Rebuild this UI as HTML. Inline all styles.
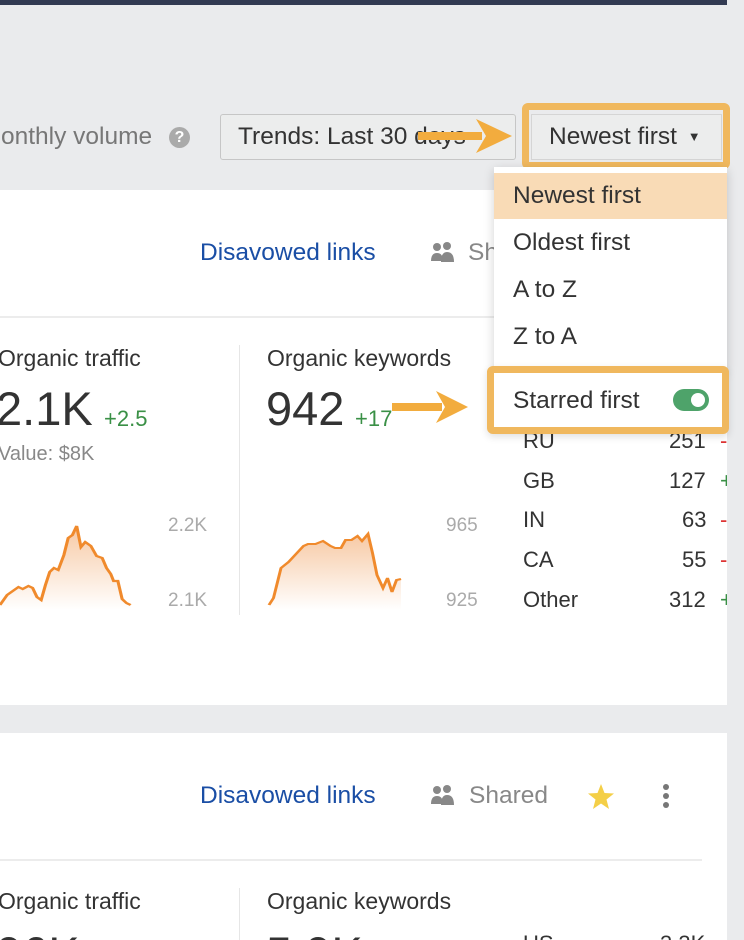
<!DOCTYPE html>
<html style="overflow:hidden;height:940px"><head><style>
body{margin:0;width:744px;height:940px;overflow:hidden;background:#eaebed;font-family:"Liberation Sans",Arial,sans-serif;position:relative;color:#333}
.a{position:absolute;white-space:nowrap}
.card{position:absolute;background:#fff;left:0;width:727px;overflow:hidden}
.t22{font-size:24.5px}
.f20{font-size:23px}
.r{font-size:22px}
.ax{font-size:19px;color:#aaa}
</style></head><body>
<div class="a" style="left:0;top:0;width:727px;height:5px;background:#323a52"></div>

<div class="a t22" style="left:1px;top:123px;color:#777">onthly volume</div>
<div class="a" style="left:169px;top:127px;width:21px;height:21px;border-radius:50%;background:#aaa;color:#fff;font-size:16px;font-weight:bold;text-align:center;line-height:21px">?</div>
<div class="a t22" style="left:220px;top:114px;width:296px;height:46px;border:1px solid #c6c6c6;border-radius:3px;background:#eceded;box-sizing:border-box;padding-left:17px;line-height:44px;color:#333">Trends: Last 30 days</div>
<svg class="a" style="left:418px;top:117px" width="96" height="38"><rect x="0" y="15" width="64" height="8" fill="#f2ac3e"/><polygon points="58,2 94,19 58,36 68,19" fill="#f2ac3e"/></svg>

<div class="a" style="left:522px;top:103px;width:208px;height:66px;border:7px solid #f0b85e;border-radius:6px;box-sizing:border-box"></div>
<div class="a t22" style="left:531px;top:114px;width:191px;height:46px;background:#eceded;border:1px solid #d5d5d5;box-sizing:border-box;padding-left:17px;line-height:44px;color:#333">Newest first <span style="font-size:13px;margin-left:4px;vertical-align:3px">▼</span></div>

<div class="card" style="top:190px;height:515px">
  <div class="a t22" style="left:200px;top:49px;color:#1a4ea5">Disavowed links</div>
  <svg class="a" style="left:430px;top:52px" width="26" height="22"><circle cx="7" cy="5" r="4" fill="#888"/><circle cx="17" cy="4" r="4" fill="#888"/><path d="M1 19 q0-8 6-8 q6 0 6 8z M11 20 q0-10 6-10 q7 0 7 10z" fill="#888"/></svg>
  <div class="a t22" style="left:468px;top:49px;color:#888">Sh</div>
  <div class="a" style="left:0;top:126px;width:727px;height:2px;background:#ececec"></div>
  <div class="a" style="left:239px;top:155px;width:1px;height:270px;background:#e6e6e6"></div>
  <div class="a f20" style="left:-2px;top:155px">Organic traffic</div>
  <div class="a" style="left:-4px;top:191px;font-size:47px;color:#333">2.1K</div>
  <div class="a r" style="left:104px;top:216px;color:#3a9046">+2.5</div>
  <div class="a" style="left:-2px;top:253px;font-size:20px;color:#888">Value: $8K</div>
  <div class="a ax" style="left:168px;top:325px">2.2K</div>
  <div class="a ax" style="left:168px;top:400px">2.1K</div>
  <svg class="a" style="left:0;top:320px" width="140" height="100"><defs><linearGradient id="g" x1="0" y1="0" x2="0" y2="1"><stop offset="0" stop-color="#f7c9a4"/><stop offset="1" stop-color="#fff"/></linearGradient></defs>
  <g transform="scale(1.42,1)">
  <path d="M0 95 L5 85 L10 80 L13 77 L16 79 L20 76 L23 78 L26 87 L29 90 L32 75 L35 62 L38 58 L41 60 L45 45 L48 28 L51 25 L54 16 L57 37 L60 32 L64 36 L68 46 L72 48 L75 58 L78 64 L80 71 L83 71 L86 89 L89 93 L92 95 L92 100 L0 100Z" fill="url(#g)"/>
  <polyline points="0,95 5,85 10,80 13,77 16,79 20,76 23,78 26,87 29,90 32,75 35,62 38,58 41,60 45,45 48,28 51,25 54,16 57,37 60,32 64,36 68,46 72,48 75,58 78,64 80,71 83,71 86,89 89,93 92,95" fill="none" stroke="#f08a2c" stroke-width="2.2"/></g></svg>
  <div class="a f20" style="left:267px;top:155px">Organic keywords</div>
  <div class="a" style="left:266px;top:191px;font-size:47px;color:#333">942</div>
  <div class="a r" style="left:355px;top:216px;color:#3a9046">+17</div>
  <svg class="a" style="left:392px;top:201px" width="80" height="34"><rect x="0" y="12" width="50" height="8" fill="#f2ac3e"/><polygon points="44,0 76,16 44,32 53,16" fill="#f2ac3e"/></svg>
  <div class="a ax" style="left:446px;top:325px">965</div>
  <div class="a ax" style="left:446px;top:400px">925</div>
  <svg class="a" style="left:266px;top:320px" width="140" height="100"><g transform="scale(1.5,1)">
  <path d="M2 95 L5 88 L10 58 L15 52 L20 44 L25 36 L28 34 L33 34 L38 31 L43 36 L46 38 L50 38 L53 30 L57 30 L61 26 L64 31 L68 24 L71 43 L74 65 L78 78 L81 68 L84 82 L87 70 L90 69 L90 100 L2 100Z" fill="url(#g)"/>
  <polyline points="2,95 5,88 10,58 15,52 20,44 25,36 28,34 33,34 38,31 43,36 46,38 50,38 53,30 57,30 61,26 64,31 68,24 71,43 74,65 78,78 81,68 84,82 87,70 90,69" fill="none" stroke="#f08a2c" stroke-width="2"/></g></svg>
  <div class="a r" style="left:523px;top:238px">RU</div><div class="a r" style="left:669px;top:238px">251</div><div class="a r" style="left:720px;top:238px;color:#d33">-</div>
  <div class="a r" style="left:523px;top:278px">GB</div><div class="a r" style="left:669px;top:278px">127</div><div class="a r" style="left:720px;top:278px;color:#3a9046">+</div>
  <div class="a r" style="left:523px;top:317px">IN</div><div class="a r" style="left:682px;top:317px">63</div><div class="a r" style="left:720px;top:317px;color:#d33">-</div>
  <div class="a r" style="left:523px;top:357px">CA</div><div class="a r" style="left:682px;top:357px">55</div><div class="a r" style="left:720px;top:357px;color:#d33">-</div>
  <div class="a r" style="left:523px;top:397px">Other</div><div class="a r" style="left:669px;top:397px">312</div><div class="a r" style="left:720px;top:397px;color:#3a9046">+</div>
</div>

<div class="card" style="top:733px;height:207px">
  <div class="a t22" style="left:200px;top:49px;color:#1a4ea5">Disavowed links</div>
  <svg class="a" style="left:430px;top:52px" width="26" height="22"><circle cx="7" cy="5" r="4" fill="#888"/><circle cx="17" cy="4" r="4" fill="#888"/><path d="M1 19 q0-8 6-8 q6 0 6 8z M11 20 q0-10 6-10 q7 0 7 10z" fill="#888"/></svg>
  <div class="a t22" style="left:469px;top:49px;color:#888">Shared</div>
  <svg class="a" style="left:586px;top:49px" width="30" height="30"><polygon points="15,2 18.5,11 28,11.5 20.5,17.5 23,27 15,21.5 7,27 9.5,17.5 2,11.5 11.5,11" fill="#f4cf47"/></svg>
  <svg class="a" style="left:660px;top:49px" width="12" height="28"><circle cx="6" cy="5" r="3" fill="#777"/><circle cx="6" cy="14" r="3" fill="#777"/><circle cx="6" cy="23" r="3" fill="#777"/></svg>
  <div class="a" style="left:0;top:126px;width:702px;height:2px;background:#ececec"></div>
  <div class="a" style="left:239px;top:155px;width:1px;height:60px;background:#e6e6e6"></div>
  <div class="a f20" style="left:-2px;top:155px">Organic traffic</div>
  <div class="a f20" style="left:267px;top:155px">Organic keywords</div>
  <div class="a" style="left:-4px;top:193px;font-size:47px;color:#333">96K</div>
  <div class="a" style="left:266px;top:193px;font-size:47px;color:#333">5.9K</div>
  <div class="a r" style="left:523px;top:198px">US</div><div class="a r" style="left:660px;top:198px">3.3K</div>
</div>

<div class="a" style="left:494px;top:167px;width:233px;height:204px;background:#fff;box-shadow:0 3px 10px rgba(0,0,0,.18)"></div>
<div class="a" style="left:494px;top:173px;width:233px;height:46px;background:#f9dbb6"></div>
<div class="a t22" style="left:513px;top:182px">Newest first</div>
<div class="a t22" style="left:513px;top:229px">Oldest first</div>
<div class="a t22" style="left:513px;top:276px">A to Z</div>
<div class="a t22" style="left:513px;top:323px">Z to A</div>
<div class="a" style="left:487px;top:366px;width:242px;height:68px;border:7px solid #f0b85e;border-radius:6px;box-sizing:border-box;background:#fff;box-shadow:0 3px 8px rgba(0,0,0,.12)"></div>
<div class="a t22" style="left:513px;top:387px">Starred first</div>
<div class="a" style="left:673px;top:389px;width:36px;height:22px;border-radius:11px;background:#4ea36a"></div>
<div class="a" style="left:691px;top:393px;width:14px;height:14px;border-radius:50%;background:#fff"></div>
</body></html>
